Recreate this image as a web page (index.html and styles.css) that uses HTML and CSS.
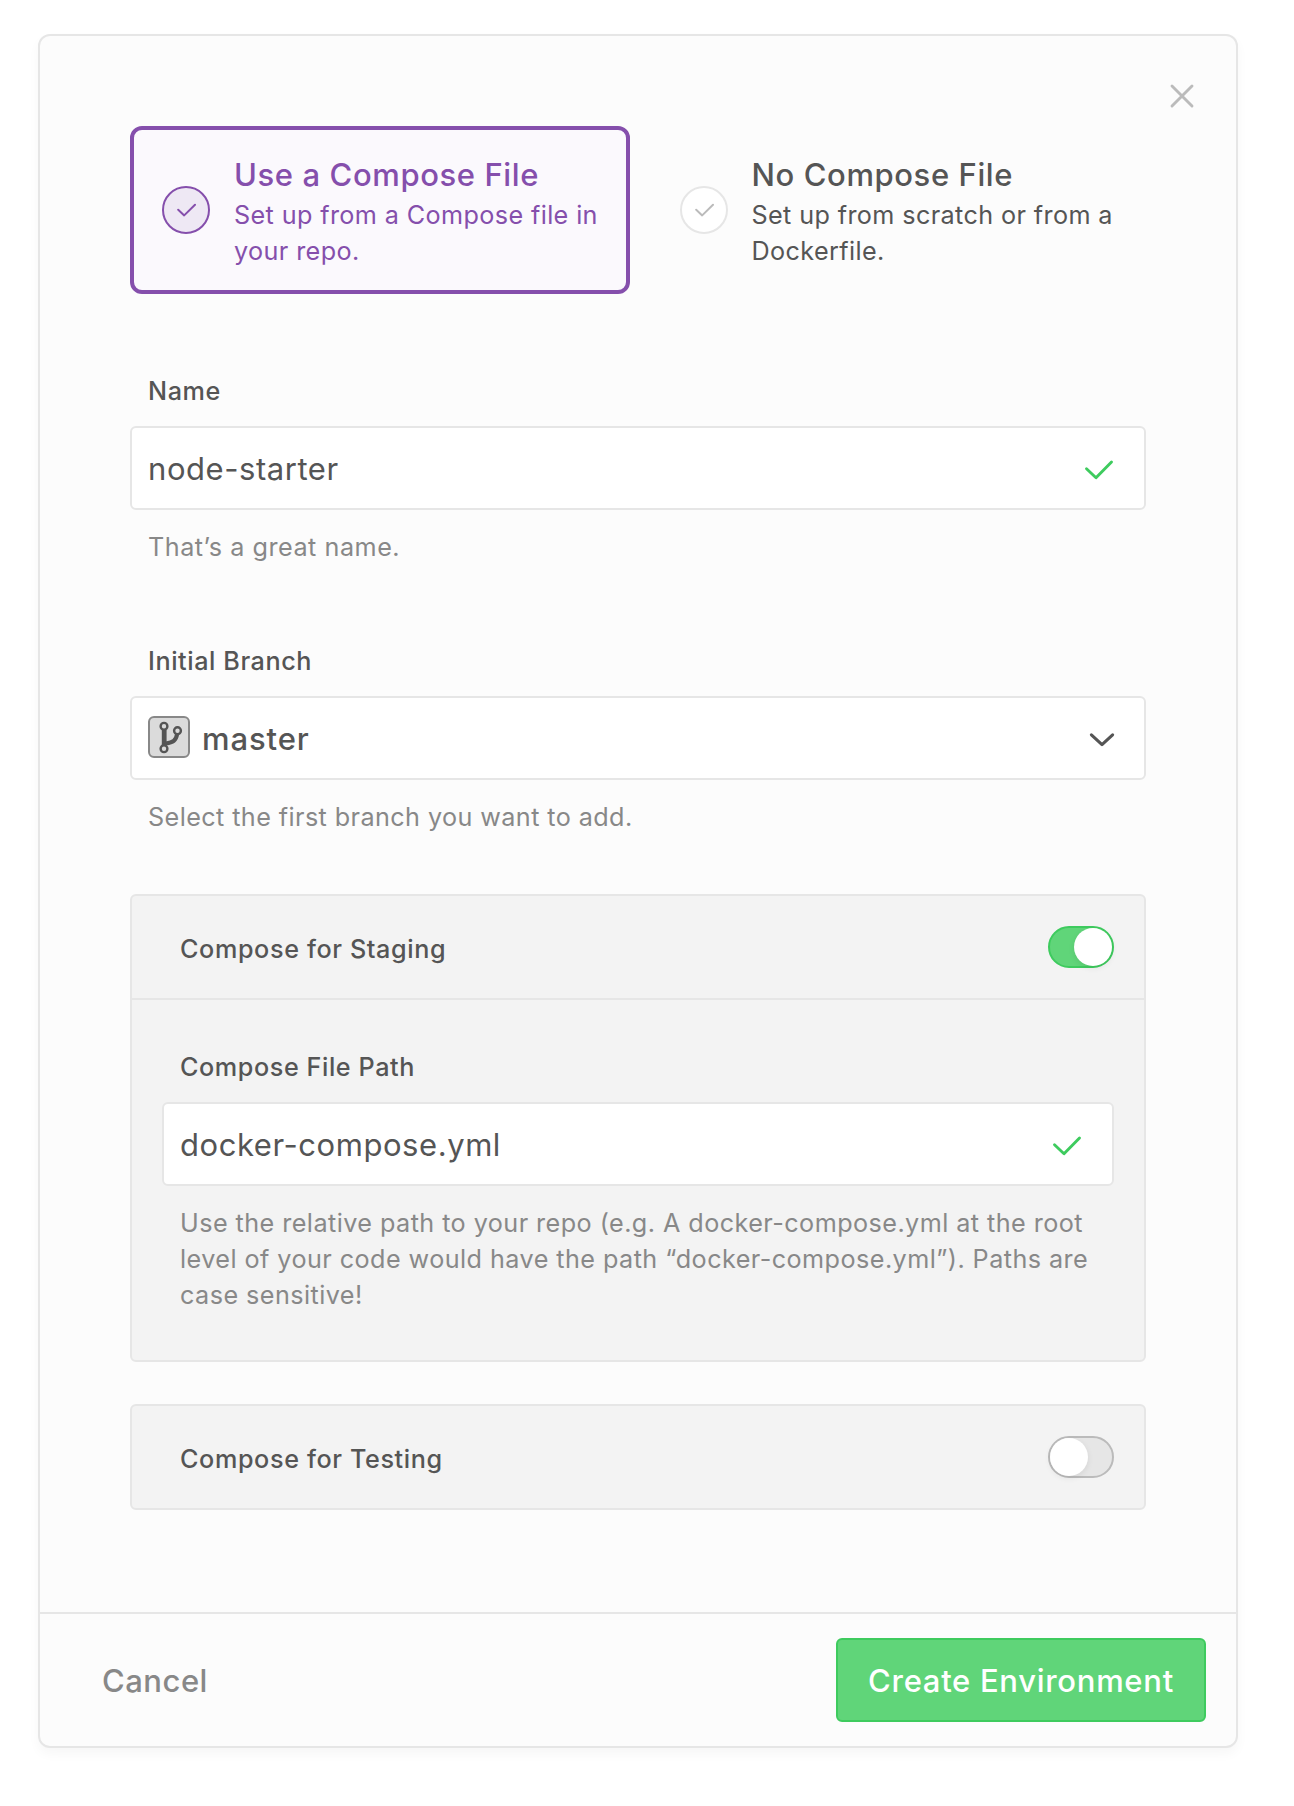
FILE: index.html
```html
<!DOCTYPE html>
<html lang="en">
<head>
<meta charset="utf-8">
<title>Create Environment</title>
<link rel="stylesheet" href="styles.css">
</head>
<body>
<main class="modal">
  <button class="close" type="button" aria-label="Close">
    <svg width="26" height="26" viewBox="0 0 26 26"><path d="M3 3 23 23M23 3 3 23"/></svg>
  </button>
  <div class="modal-body">
    <div class="options">
      <div class="option option-selected">
        <span class="option-mark"><svg width="20" height="14" viewBox="0 0 20 14"><path d="M2.2 6.8 8.2 12.4 19 1.8"/></svg></span>
        <div class="option-text">
          <h2 class="option-title">Use a Compose File</h2>
          <p class="option-desc">Set up from a Compose file in your repo.</p>
        </div>
      </div>
      <div class="option">
        <span class="option-mark"><svg width="20" height="14" viewBox="0 0 20 14"><path d="M2.2 6.8 8.2 12.4 19 1.8"/></svg></span>
        <div class="option-text">
          <h2 class="option-title">No Compose File</h2>
          <p class="option-desc">Set up from scratch or from a Dockerfile.</p>
        </div>
      </div>
    </div>

    <div class="field">
      <div class="label">Name</div>
      <div class="control">
        <span class="value">node-starter</span>
        <svg class="valid" width="30" height="22" viewBox="0 0 30 22"><path d="M2.5 10.8 12 19.7 27.5 4"/></svg>
      </div>
      <p class="help help-short">That’s a great name.</p>
    </div>

    <div class="field">
      <div class="label">Initial Branch</div>
      <div class="control">
        <span class="branch-icon">
          <svg width="38" height="38" viewBox="2 2 38 38">
            <path class="stem" d="M16.2 14V29"/>
            <path class="arm" d="M29 18.5C28 24.5 25 26.5 18 27.5"/>
            <circle cx="16" cy="10.3" r="3.4"/>
            <circle cx="29.5" cy="14.7" r="3.4"/>
            <circle cx="16" cy="32.7" r="3.4"/>
          </svg>
        </span>
        <span class="value value-strong">master</span>
        <svg class="chevron" width="26" height="16" viewBox="0 0 26 16"><path d="M2.4 2.9 13 12.7 23.6 2.9"/></svg>
      </div>
      <p class="help">Select the first branch you want to add.</p>
    </div>

    <section class="panel">
      <header class="panel-header">
        <h3 class="panel-title">Compose for Staging</h3>
        <span class="toggle toggle-on"><span class="knob"></span></span>
      </header>
      <div class="panel-body">
        <div class="label">Compose File Path</div>
        <div class="control">
          <span class="value">docker-compose.yml</span>
          <svg class="valid" width="30" height="22" viewBox="0 0 30 22"><path d="M2.5 10.8 12 19.7 27.5 4"/></svg>
        </div>
        <p class="help">Use the relative path to your repo (e.g. A docker-compose.yml at the root level of your code would have the path “docker-compose.yml”). Paths are case sensitive!</p>
      </div>
    </section>

    <section class="panel">
      <header class="panel-header">
        <h3 class="panel-title">Compose for Testing</h3>
        <span class="toggle"><span class="knob"></span></span>
      </header>
    </section>
  </div>
  <footer class="modal-footer">
    <button class="cancel" type="button">Cancel</button>
    <button class="submit" type="button">Create Environment</button>
  </footer>
</main>
</body>
</html>
```
FILE: styles.css
```css
* {
  box-sizing: border-box;
}

body {
  margin: 0;
  padding: 34px 56px 58px 38px;
  background: #fff;
  color: #555;
  font-family: Inter, "Liberation Sans", sans-serif;
  font-size: 25.2px;
  line-height: 36px;
  letter-spacing: 0.41px;
}

h2, h3, p {
  margin: 0;
}

button {
  padding: 0;
  border: 0;
  background: none;
  font: inherit;
}

svg {
  display: block;
  flex: none;
  fill: none;
  stroke: currentColor;
  stroke-linecap: round;
  stroke-linejoin: round;
}

.modal {
  position: relative;
  width: 1200px;
  border: 2px solid #e6e6e6;
  border-radius: 12px;
  background: #fcfcfc;
  box-shadow: 0 6px 12px rgba(0, 0, 0, 0.035);
}

.close {
  position: absolute;
  top: 47px;
  right: 41px;
  color: #bbb;
}

.close svg {
  stroke-width: 2.9;
}

.modal-body {
  padding: 90px 90px 102px;
}

.options {
  display: grid;
  grid-template-columns: 500px 498px;
  gap: 18px;
  margin-bottom: 79px;
}

.option {
  display: flex;
  align-items: center;
  height: 168px;
  padding-left: 28px;
  border: 4px solid transparent;
  border-radius: 12px;
}

.option-selected {
  border-color: #854fac;
  background: #fbf9fd;
  color: #854fac;
}

.option-mark {
  display: flex;
  flex: none;
  align-items: center;
  justify-content: center;
  width: 48px;
  height: 48px;
  margin-right: 23.5px;
  border: 2px solid #e6e6e6;
  border-radius: 50%;
  background: #fff;
  color: #bbb;
}

.option-mark svg {
  stroke-width: 2;
}

.option-selected .option-mark {
  margin-right: 24px;
  border-color: #854fac;
  background: #eee8f4;
  color: #854fac;
}

.option-text {
  padding-top: 6px;
  width: 375px;
}

.option-title {
  margin-bottom: 4px;
  font-size: 31px;
  font-weight: 500;
  line-height: 36px;
  letter-spacing: 0.6px;
}

.option-desc {
  letter-spacing: 0.38px;
}

.field {
  margin-bottom: 78px;
}

.field + .panel {
  margin-top: -19px;
}

.label {
  padding: 0 18px;
  margin-bottom: 17px;
  font-weight: 500;
  letter-spacing: 0.58px;
}

.control {
  display: flex;
  align-items: center;
  height: 84px;
  padding: 0 30px 0 16px;
  border: 2px solid #e6e6e6;
  border-radius: 6px;
  background: #fff;
}

.value {
  flex: 1;
  padding-top: 2px;
  font-size: 31px;
  letter-spacing: 0.56px;
}

.value-strong {
  font-weight: 500;
  letter-spacing: 0.9px;
}

.valid {
  margin-top: 2px;
  color: #3ecb5e;
  stroke-width: 2.9;
}

.chevron {
  margin-top: 4px;
  margin-right: -1px;
  stroke-width: 3.1;
}

.branch-icon {
  width: 42px;
  height: 42px;
  margin-right: 12px;
  margin-top: -2px;
  border: 2px solid #888;
  border-radius: 6px;
  background: #dbdbdb;
}

.branch-icon svg {
  stroke-width: 2.4;
}

.branch-icon circle {
  fill: #dbdbdb;
}

.branch-icon .stem {
  stroke-width: 4.8;
  stroke-linecap: butt;
}

.branch-icon .arm {
  stroke-width: 4.2;
}

.help {
  margin-top: 19px;
  padding: 0 18px;
  color: #888;
}

.help-short {
  letter-spacing: 0.52px;
}

.panel {
  border: 2px solid #e6e6e6;
  border-radius: 6px;
  background: #f3f3f3;
}

.panel + .panel {
  margin-top: 42px;
}

.panel-header {
  display: flex;
  align-items: center;
  justify-content: space-between;
  height: 102px;
  padding: 0 30px 0 48px;
}

.panel-title {
  padding-top: 4px;
  font-size: inherit;
  font-weight: 500;
  letter-spacing: 0.62px;
}

.panel-body {
  padding: 49px 30px 47px;
  border-top: 2px solid #e6e6e6;
}

.panel-body .help {
  padding-right: 8px;
  letter-spacing: 0.44px;
}

.toggle {
  display: flex;
  width: 66px;
  height: 42px;
  border: 2px solid #bbb;
  border-radius: 21px;
  background: #e6e6e6;
}

.knob {
  width: 38px;
  height: 38px;
  border-radius: 50%;
  background: #fff;
  box-shadow: 0 2px 6px rgba(0, 0, 0, 0.08);
}

.toggle-on {
  justify-content: flex-end;
  border-color: #3ecb5e;
  background: #60d579;
}

.modal-footer {
  display: flex;
  align-items: center;
  justify-content: space-between;
  height: 134px;
  padding: 0 30px 0 62px;
  border-top: 2px solid #e6e6e6;
}

.cancel,
.submit {
  padding-top: 2px;
  font-size: 31px;
  font-weight: 500;
  letter-spacing: 0.7px;
}

.cancel {
  color: #888;
  letter-spacing: 0.5px;
}

.submit {
  width: 370px;
  height: 84px;
  border: 2px solid #3ecb5e;
  border-radius: 6px;
  background: #60d579;
  color: #fff;
}
```
